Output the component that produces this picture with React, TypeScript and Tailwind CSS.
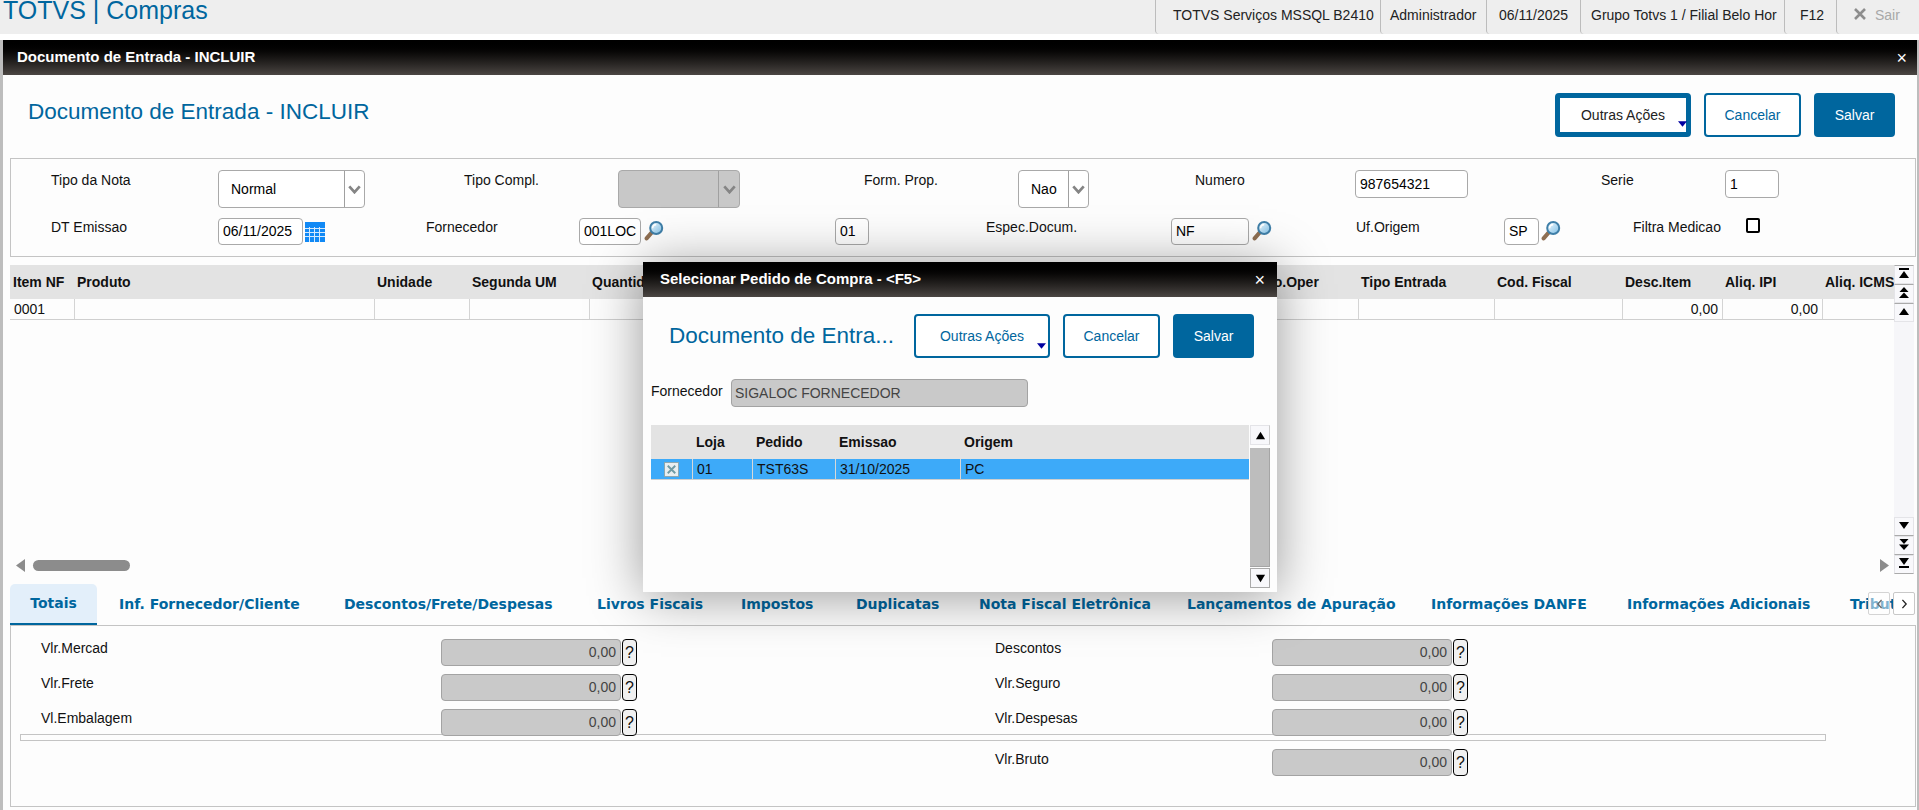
import type { ReactNode } from 'react'

const Lupa = ({ className = '' }: { className?: string }) => (
  <svg viewBox="0 0 20 20" className={`h-[20px] w-[20px] shrink-0 ${className}`}>
    <defs>
      <linearGradient id="vidro" x1="0" y1="0" x2="1" y2="1">
        <stop offset="0" stopColor="#f2fbff" />
        <stop offset="1" stopColor="#7fbfe6" />
      </linearGradient>
    </defs>
    <line x1="2.6" y1="17.4" x2="7.6" y2="11.6" stroke="#8f6f52" strokeWidth="4" strokeLinecap="round" />
    <circle cx="12.2" cy="7" r="6" fill="url(#vidro)" stroke="#3f7fa8" strokeWidth="2" />
    <path d="M8.6 7.2a3.6 3.6 0 0 1 3.6-3.6" fill="none" stroke="#ffffff" strokeWidth="1.6" />
  </svg>
)

const Calendar = () => (
  <svg viewBox="0 0 20 20" className="ml-[2px] mt-[4px] h-[20px] w-[20px] shrink-0">
    <rect width="20" height="20" fill="#1189f5" />
    <path d="M0 6.5H20M0 10.5H20M0 14.5H20M4.5 5V20M9.5 5V20M14.5 5V20" stroke="#d4e9fd" strokeWidth="1" />
  </svg>
)

const Chevron = () => (
  <svg viewBox="0 0 14 10" className="h-[9px] w-[13px]">
    <path d="M1.2 1.5 7 8l5.8-6.5" fill="none" stroke="#858585" strokeWidth="3" />
  </svg>
)

const Combo = ({ width, value, disabled = false, arrow }: { width: string; value?: string; disabled?: boolean; arrow: string }) => (
  <div className={`${width} ${disabled ? 'bg-[#c8c8c8]' : 'bg-white'} flex h-[38px] shrink-0 items-center rounded-[4px] border border-[#a9a9a9] text-[14px] text-black`}>
    <span className="flex-1 pl-[12px] pt-[1px]">{value}</span>
    <span className={`${arrow} flex h-full items-center justify-center border-l border-[#a0a0a0]`}>
      <Chevron />
    </span>
  </div>
)

const Input = ({ width, value, height = 'h-[27px]' }: { width: string; value: string; height?: string }) => (
  <div className={`${width} ${height} flex shrink-0 items-center rounded-[4px] border border-[#a9a9a9] bg-white pl-[4px] text-[14px] text-black`}>
    {value}
  </div>
)

const Label = ({ className, children }: { className: string; children: ReactNode }) => (
  <span className={`${className} shrink-0 whitespace-nowrap text-[14px] text-[#111]`}>{children}</span>
)

const TitleBar = ({ title, height, padding }: { title: string; height: string; padding: string }) => (
  <div className={`${height} ${padding} flex shrink-0 items-center justify-between bg-gradient-to-b from-black to-[#4b4643] text-[15px] font-bold text-white`}>
    <span>{title}</span>
    <span className="text-[18px] font-normal leading-none">×</span>
  </div>
)

const Actions = ({ focused = false }: { focused?: boolean }) => (
  <div className="flex h-[44px] shrink-0 items-stretch text-[14px]">
    <div className={`${focused ? 'border-[5px] border-[#00669e] text-[#222]' : 'border-2 border-[#00669e] text-[#00669e]'} relative flex w-[136px] items-center justify-center rounded-[4px] bg-white`}>
      Outras Ações
      <svg viewBox="0 0 10 6" className={`${focused ? 'bottom-[5px] right-[-1px]' : 'bottom-[7px] right-[2px]'} absolute h-[6px] w-[9px]`}>
        <polygon points="0,0 10,0 5,6" fill="#0000a0" />
      </svg>
    </div>
    <div className="ml-[13px] flex w-[97px] items-center justify-center rounded-[4px] border-2 border-[#00669e] bg-white text-[#00669e]">Cancelar</div>
    <div className="ml-[13px] flex w-[81px] items-center justify-center rounded-[4px] bg-[#00669e] text-white">Salvar</div>
  </div>
)

type ArrowKind = 'first' | 'pageUp' | 'up' | 'down' | 'pageDown' | 'last'

const ScrollArrow = ({ kind }: { kind: ArrowKind }) => {
  const up = kind === 'first' || kind === 'pageUp' || kind === 'up'
  const shapes: Record<ArrowKind, ReactNode> = {
    first: (
      <>
        <rect x="1" y="0" width="10" height="2" />
        <polygon points="6,3 11,10 1,10" />
      </>
    ),
    pageUp: (
      <>
        <polygon points="6,0 10.5,5 1.5,5" />
        <polygon points="6,5.5 11,11 1,11" />
      </>
    ),
    up: <polygon points="6,2 11,9 1,9" />,
    down: <polygon points="6,9 11,2 1,2" />,
    pageDown: (
      <>
        <polygon points="6,5 10.5,0 1.5,0" />
        <polygon points="6,11 11,5.5 1,5.5" />
      </>
    ),
    last: (
      <>
        <polygon points="6,7 11,0 1,0" />
        <rect x="1" y="8" width="10" height="2" />
      </>
    ),
  }
  return (
    <div className={`${up ? 'border-t-[#aaa]' : 'border-b-[#aaa]'} flex h-[19px] items-center justify-center border border-[#e4e4e8] bg-[#f8f8fb] pb-[2px]`}>
      <svg viewBox="0 0 12 12" className="h-[12px] w-[12px]" fill="#000">
        {shapes[kind]}
      </svg>
    </div>
  )
}

const Money = () => (
  <>
    <div className="flex h-[27px] w-[180px] shrink-0 items-center justify-end rounded-[4px] border border-[#a3a3a3] bg-[#c9c9c9] pr-[4px] text-[14px] text-[#444]">0,00</div>
    <div className="ml-[1px] flex h-[27px] w-[15px] shrink-0 items-center justify-center rounded-[4px] border border-black bg-[#f0f0f0] text-[16px] text-[#111]">?</div>
  </>
)

const TotalsRow = ({ left, right, className = '', leading = 'leading-[18px]' }: { left?: string; right: string; className?: string; leading?: string }) => (
  <div className={`${className} relative z-10 flex h-[27px] items-start pl-[30px]`}>
    <Label className={`${leading} w-[400px]`}>{left}</Label>
    {left ? <Money /> : <div className="w-[196px]" />}
    <Label className={`${leading} ml-[358px] w-[277px]`}>{right}</Label>
    <Money />
  </div>
)

// largura fixa por aba para manter cada título no lugar
const tabs = [
  { name: 'Inf. Fornecedor/Cliente', width: 'w-[225px]' },
  { name: 'Descontos/Frete/Despesas', width: 'w-[253px]' },
  { name: 'Livros Fiscais', width: 'w-[144px]' },
  { name: 'Impostos', width: 'w-[115px]' },
  { name: 'Duplicatas', width: 'w-[123px]' },
  { name: 'Nota Fiscal Eletrônica', width: 'w-[208px]' },
  { name: 'Lançamentos de Apuração', width: 'w-[244px]' },
  { name: 'Informações DANFE', width: 'w-[196px]' },
  { name: 'Informações Adicionais', width: 'w-[223px]' },
  { name: 'Tributos', width: 'w-[80px]' },
]

const columns = [
  { name: 'Item NF', width: 'w-[64px]', value: '0001' },
  { name: 'Produto', width: 'w-[300px]' },
  { name: 'Unidade', width: 'w-[95px]' },
  { name: 'Segunda UM', width: 'w-[120px]' },
  { name: 'Quantidade', width: 'w-[661px]' },
  { name: 'Tipo.Oper', width: 'w-[108px]' },
  { name: 'Tipo Entrada', width: 'w-[136px]' },
  { name: 'Cod. Fiscal', width: 'w-[128px]' },
  { name: 'Desc.Item', width: 'w-[100px]', money: true },
  { name: 'Aliq. IPI', width: 'w-[100px]', money: true },
  { name: 'Aliq. ICMS', width: 'w-[72px]' },
]

const orderColumns = [
  { name: '', width: 'w-[41px]' },
  { name: 'Loja', width: 'w-[60px]', value: '01' },
  { name: 'Pedido', width: 'w-[83px]', value: 'TST63S' },
  { name: 'Emissao', width: 'w-[125px]', value: '31/10/2025' },
  { name: 'Origem', width: 'flex-1', value: 'PC' },
]

function OrderDialog() {
  return (
    <div className="absolute left-[643px] top-[262px] z-20 flex h-[330px] w-[634px] flex-col bg-[#fdfdfd] shadow-[0_4px_50px_rgba(0,0,0,0.4)]">
      <TitleBar title="Selecionar Pedido de Compra - <F5>" height="h-[35px]" padding="pl-[17px] pr-[12px]" />
      <div className="mt-[17px] flex items-center pr-[23px]">
        <h2 className="ml-[26px] text-[22.5px] font-normal leading-[40px] text-[#00669e]">Documento de Entra...</h2>
        <div className="ml-auto">
          <Actions />
        </div>
      </div>
      <div className="ml-[8px] mt-[21px] flex items-start">
        <Label className="w-[80px] leading-[24px]">Fornecedor</Label>
        <div className="flex h-[28px] w-[297px] items-center rounded-[4px] border border-[#a3a3a3] bg-[#c9c9c9] pl-[3px] text-[14px] text-[#444]">SIGALOC FORNECEDOR</div>
      </div>
      <div className="ml-[8px] mt-[18px] flex">
        <div className="w-[598px]">
          <div className="flex h-[34px] items-center bg-[#e3e3e3] text-[14px] font-bold text-[#111]">
            {orderColumns.map((c) => (
              <span key={c.name} className={`${c.width} pl-[4px]`}>
                {c.name}
              </span>
            ))}
          </div>
          <div className="flex h-[21px] items-stretch border-b border-[#cfcfcf] bg-[#3daaf9] text-[14px] text-[#111]">
            {orderColumns.map((c, i) => (
              <span key={c.name} className={`${c.width} ${i > 0 ? 'border-l border-[#d8d8d8] pl-[4px]' : 'flex items-center justify-center'} leading-[20px]`}>
                {i === 0 ? (
                  <svg viewBox="0 0 16 16" className="h-[15px] w-[15px]">
                    <rect x="0.5" y="0.5" width="15" height="15" fill="#e9eef0" stroke="#8ba5ad" />
                    <path d="M4 4l8 8M12 4l-8 8" stroke="#6f9aa3" strokeWidth="2" />
                  </svg>
                ) : (
                  c.value
                )}
              </span>
            ))}
          </div>
        </div>
        <div className="ml-[1px] flex h-[163px] w-[20px] flex-col">
          <div className="flex h-[20px] items-center justify-center border border-[#e4e4e8] border-r-[#ccc] bg-[#f8f8fb]">
            <svg viewBox="0 0 12 12" className="h-[11px] w-[11px]"><polygon points="6,2 11,10 1,10" /></svg>
          </div>
          <div className="mb-[1px] mt-[3px] flex-1 border-b border-r border-[#a5a5a5] bg-[#bdbdbd]" />
          <div className="flex h-[20px] items-center justify-center border border-[#aaa] bg-[#f8f8fb]">
            <svg viewBox="0 0 12 12" className="h-[11px] w-[11px]"><polygon points="6,10 11,2 1,2" /></svg>
          </div>
        </div>
      </div>
    </div>
  )
}

export default function App() {
  return (
    <div className="relative h-[810px] w-[1919px] overflow-hidden bg-white font-['Liberation_Sans',Arial,sans-serif]">
      {/* barra do topo */}
      <header className="flex h-[34px] items-stretch bg-[#eeeeee] text-[14px] text-[#222]">
        <div className="flex-1 pl-[3px] text-[25px] leading-[20px] text-[#00669e]">TOTVS | Compras</div>
        <div className="w-[225px] rounded-bl-[4px] border-l border-[#bcbcbc] pl-[17px] pt-[5px]">TOTVS Serviços MSSQL B2410</div>
        <div className="w-[106px] rounded-bl-[4px] border-l border-[#bcbcbc] pl-[9px] pt-[5px]">Administrador</div>
        <div className="w-[94px] rounded-bl-[4px] border-l border-[#bcbcbc] pl-[12px] pt-[5px]">06/11/2025</div>
        <div className="w-[204px] rounded-bl-[4px] border-l border-[#bcbcbc] pl-[10px] pt-[5px]">Grupo Totvs 1 / Filial Belo Hor</div>
        <div className="w-[52px] rounded-bl-[4px] border-l border-[#bcbcbc] pl-[15px] pt-[5px]">F12</div>
        <div className="flex w-[83px] items-start gap-[8px] rounded-bl-[4px] border-l border-[#bcbcbc] pl-[16px] pt-[5px] text-[#a8a8a8]">
          <svg viewBox="0 0 14 14" className="mt-[2px] h-[14px] w-[14px]">
            <path d="M2 2l10 10M12 2 2 12" stroke="#8d8d8d" strokeWidth="2.6" />
          </svg>
          Sair
        </div>
      </header>

      <div className="mt-[6px] flex h-[770px] flex-col border-l-[3px] border-r-[2px] border-[#bdbdbd] bg-[#fdfdfd]">
        <TitleBar title="Documento de Entrada - INCLUIR" height="h-[35px]" padding="pl-[14px] pr-[10px]" />

        <div className="flex h-[83px] shrink-0 items-start pr-[22px] pt-[18px]">
          <h1 className="ml-[25px] text-[22.5px] font-normal leading-[38px] text-[#00669e]">Documento de Entrada - INCLUIR</h1>
          <div className="ml-auto">
            <Actions focused />
          </div>
        </div>

        {/* campos do cabeçalho */}
        <section className="ml-[7px] mr-[1px] h-[99px] shrink-0 border border-[#c4c4c4] pl-[40px] pt-[11px]">
          <div className="flex items-start">
            <Label className="w-[167px] leading-[20px]">Tipo da Nota</Label>
            <Combo width="w-[147px]" value="Normal" arrow="w-[20px]" />
            <Label className="ml-[99px] w-[154px] leading-[20px]">Tipo Compl.</Label>
            <Combo width="w-[122px]" disabled arrow="w-[21px]" />
            <Label className="ml-[124px] w-[154px] leading-[20px]">Form. Prop.</Label>
            <Combo width="w-[71px]" value="Nao" arrow="w-[20px]" />
            <Label className="ml-[106px] w-[160px] leading-[20px]">Numero</Label>
            <Input width="w-[113px]" value="987654321" height="h-[28px]" />
            <Label className="ml-[133px] w-[124px] leading-[20px]">Serie</Label>
            <Input width="w-[54px]" value="1" height="h-[28px]" />
          </div>
          <div className="mt-[10px] flex items-start">
            <Label className="w-[167px] leading-[18px]">DT Emissao</Label>
            <Input width="w-[85px]" value="06/11/2025" />
            <Calendar />
            <Label className="ml-[101px] w-[153px] leading-[18px]">Fornecedor</Label>
            <Input width="w-[62px]" value="001LOC" />
            <Lupa className="ml-[3px] mt-[3px]" />
            <Input width="w-[34px] ml-[171px]" value="01" />
            <Label className="ml-[117px] w-[185px] leading-[18px]">Espec.Docum.</Label>
            <Input width="w-[78px]" value="NF" />
            <Lupa className="ml-[3px] mt-[3px]" />
            <Label className="ml-[84px] w-[148px] leading-[18px]">Uf.Origem</Label>
            <Input width="w-[35px]" value="SP" />
            <Lupa className="ml-[2px] mt-[3px]" />
            <Label className="ml-[72px] w-[113px] leading-[18px]">Filtra Medicao</Label>
            <div className="h-[15px] w-[14px] rounded-[2px] border-2 border-black bg-white" />
          </div>
        </section>

        {/* grade de itens */}
        <section className="ml-[7px] mt-[8px] flex h-[309px] shrink-0">
          <div className="flex w-[1884px] flex-col overflow-hidden">
            <div className="flex h-[34px] shrink-0 items-center bg-[#e3e3e3] text-[14px] font-bold text-[#111]">
              {columns.map((c) => (
                <span key={c.name} className={`${c.width} shrink-0 overflow-hidden whitespace-nowrap pl-[3px]`}>
                  {c.name}
                </span>
              ))}
            </div>
            <div className="flex h-[21px] shrink-0 border-b border-[#cfcfcf] text-[14px] leading-[20px] text-[#111]">
              {columns.map((c, i) => (
                <span key={c.name} className={`${c.width} ${i > 0 ? 'border-l border-[#d4d4d4]' : ''} ${c.money ? 'pr-[4px] text-right' : 'pl-[4px]'} shrink-0`}>
                  {c.money ? '0,00' : c.value}
                </span>
              ))}
            </div>
            <div className="mt-auto flex h-[13px] items-center pb-[5px]">
              <svg viewBox="0 0 9 13" className="ml-[6px] h-[13px] w-[9px]"><polygon points="9,0 9,13 0,6.5" fill="#8c8c8c" /></svg>
              <div className="ml-[8px] h-[11px] w-[97px] rounded-[6px] bg-[#8c8c8c]" />
              <svg viewBox="0 0 9 13" className="ml-auto mr-[5px] h-[13px] w-[9px]"><polygon points="0,0 0,13 9,6.5" fill="#8c8c8c" /></svg>
            </div>
          </div>
          <div className="flex w-[20px] flex-col bg-[#f6f6f9]">
            <ScrollArrow kind="first" />
            <ScrollArrow kind="pageUp" />
            <ScrollArrow kind="up" />
            <div className="flex-1" />
            <ScrollArrow kind="down" />
            <ScrollArrow kind="pageDown" />
            <ScrollArrow kind="last" />
          </div>
        </section>

        {/* abas */}
        <nav className="relative ml-[7px] mt-[10px] flex h-[41px] shrink-0 overflow-hidden font-['DejaVu_Sans',sans-serif] text-[14px] font-bold text-[#00669e]">
          <div className="flex w-[87px] shrink-0 items-center justify-center rounded-t-[5px] border-b-[2px] border-[#00669e] bg-[#e3effa]">Totais</div>
          <div className="ml-[22px] flex items-center whitespace-nowrap">
            {tabs.map((t) => (
              <span key={t.name} className={`${t.width} shrink-0`}>
                {t.name}
              </span>
            ))}
          </div>
          <div className="absolute left-[1858px] top-[8px] flex h-[23px] w-[22px] items-center justify-center rounded-[2px] border border-[#d4d4d4] bg-white/50 text-[#555]">
            <svg viewBox="0 0 8 12" className="h-[10px] w-[7px]"><path d="M6.5 1 2 6l4.5 5" fill="none" stroke="#666" strokeWidth="1.6" /></svg>
          </div>
          <div className="absolute left-[1883px] top-[8px] flex h-[23px] w-[22px] items-center justify-center rounded-[2px] border border-[#c8c8c8] bg-white">
            <svg viewBox="0 0 8 12" className="h-[10px] w-[7px]"><path d="M1.5 1 6 6l-4.5 5" fill="none" stroke="#222" strokeWidth="1.6" /></svg>
          </div>
        </nav>

        <section className="relative ml-[7px] mr-[1px] h-[182px] shrink-0 border border-[#c4c4c4] pt-[13px]">
          <div className="absolute left-[9px] top-[108px] h-[7px] w-[1806px] border border-[#c4c4c4]" />
          <TotalsRow left="Vlr.Mercad" right="Descontos" />
          <TotalsRow left="Vlr.Frete" right="Vlr.Seguro" className="mt-[8px]" />
          <TotalsRow left="Vl.Embalagem" right="Vlr.Despesas" className="mt-[8px]" />
          <TotalsRow right="Vlr.Bruto" className="mt-[13px]" leading="leading-[21px]" />
        </section>
      </div>

      <OrderDialog />
    </div>
  )
}
